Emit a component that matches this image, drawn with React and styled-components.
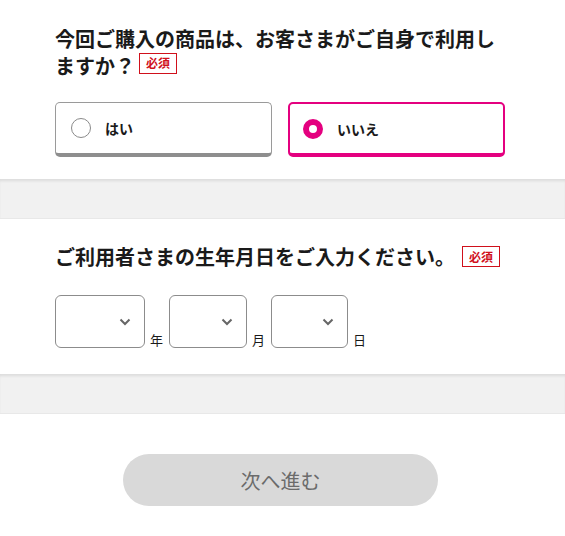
import React from "react"
import styled, { createGlobalStyle } from "styled-components"

const GlobalStyle = createGlobalStyle`
  body {
    margin: 0;
    background: #fff;
    font-family: "Noto Sans CJK JP", "Noto Sans", sans-serif;
    color: #1a1a1a;
  }
`

const MAGENTA = "#e4007f"

const Page = styled.div`
  width: 565px;
  display: flex;
  flex-direction: column;
`

const Section = styled.section`
  background: #fff;
  padding: ${(p) => p.$pad};
`

const Band = styled.div`
  height: 39px;
  background: #f1f1f1;
  box-shadow: inset 0 3px 3px -1px rgba(0, 0, 0, 0.09);
  border-bottom: 1px solid #e8e8e8;
`

const Title = styled.h2`
  margin: 0;
  font-size: 20px;
  font-weight: 700;
  line-height: 27px;
  color: #1a1a1a;
`

const TitleRow = styled.div`
  display: flex;
  align-items: center;
  gap: 7px;
`

const Badge = styled.span`
  display: inline-flex;
  align-items: center;
  height: 19px;
  padding: 0 6px;
  border: 1px solid #d0101b;
  color: #d0101b;
  font-size: 12px;
  font-weight: 700;
  line-height: 1;
  vertical-align: ${(p) => (p.$inline ? "6px" : "baseline")};
  margin-left: ${(p) => (p.$inline ? "4px" : "0")};
`

const Choices = styled.div`
  display: grid;
  grid-template-columns: 1fr 1fr;
  gap: 16px;
  margin-top: 23px;
`

const Choice = styled.label`
  box-sizing: border-box;
  height: 55px;
  display: flex;
  align-items: center;
  gap: 14px;
  border-radius: 5px;
  border: ${(p) => (p.$checked ? `2px solid ${MAGENTA}` : "1px solid #9a9a9a")};
  border-bottom: 4px solid ${(p) => (p.$checked ? MAGENTA : "#8e8e8e")};
  padding-left: ${(p) => (p.$checked ? "13px" : "15px")};
  font-size: 14px;
  font-weight: 700;
  color: #1a1a1a;
  background: #fff;
`

const Radio = styled.span`
  box-sizing: border-box;
  width: 20px;
  height: 20px;
  border-radius: 50%;
  flex: none;
  border: ${(p) => (p.$checked ? `6.5px solid ${MAGENTA}` : "1px solid #8a8a8a")};
  background: #fff;
`

const DateRow = styled.div`
  display: flex;
  align-items: flex-end;
  margin-top: 25px;
`

const SelectBox = styled.div`
  box-sizing: border-box;
  width: ${(p) => p.$w}px;
  height: 53px;
  border: 1px solid #8c8c8c;
  border-radius: 6px;
  display: flex;
  align-items: center;
  justify-content: flex-end;
  padding-right: 13px;
  background: #fff;
`

const Unit = styled.span`
  font-size: 13px;
  line-height: 16px;
  color: #1a1a1a;
  margin: 0 ${(p) => p.$after}px 0 5px;
`

const Footer = styled.div`
  padding: 40px 0 30px;
  display: flex;
  justify-content: center;
`

const NextButton = styled.button`
  width: 315px;
  height: 52px;
  border: none;
  border-radius: 26px;
  background: #d9d9d9;
  color: #6b6b6b;
  font-family: inherit;
  font-size: 20px;
  margin-right: 4px;
`

const Chevron = () => (
  <svg width="12" height="8" viewBox="0 0 12 8">
    <path d="M1.5 1.5l4.5 4.5 4.5-4.5" fill="none" stroke="#666" strokeWidth="2" />
  </svg>
)

const Select = ({ w }) => (
  <SelectBox $w={w}>
    <Chevron />
  </SelectBox>
)

export default function App() {
  return (
    <Page>
      <GlobalStyle />
      <Section $pad="25px 60px 22px 55px">
        <Title>
          今回ご購入の商品は、お客さまがご自身で利用しますか？
          <Badge $inline>必須</Badge>
        </Title>
        <Choices>
          <Choice>
            <Radio />
            はい
          </Choice>
          <Choice $checked>
            <Radio $checked />
            いいえ
          </Choice>
        </Choices>
      </Section>
      <Band />
      <Section $pad="24px 60px 26px 55px">
        <TitleRow>
          <Title>ご利用者さまの生年月日をご入力ください。</Title>
          <Badge>必須</Badge>
        </TitleRow>
        <DateRow>
          <Select w={90} />
          <Unit $after={6}>年</Unit>
          <Select w={78} />
          <Unit $after={6}>月</Unit>
          <Select w={77} />
          <Unit $after={0}>日</Unit>
        </DateRow>
      </Section>
      <Band />
      <Footer>
        <NextButton>次へ進む</NextButton>
      </Footer>
    </Page>
  )
}
